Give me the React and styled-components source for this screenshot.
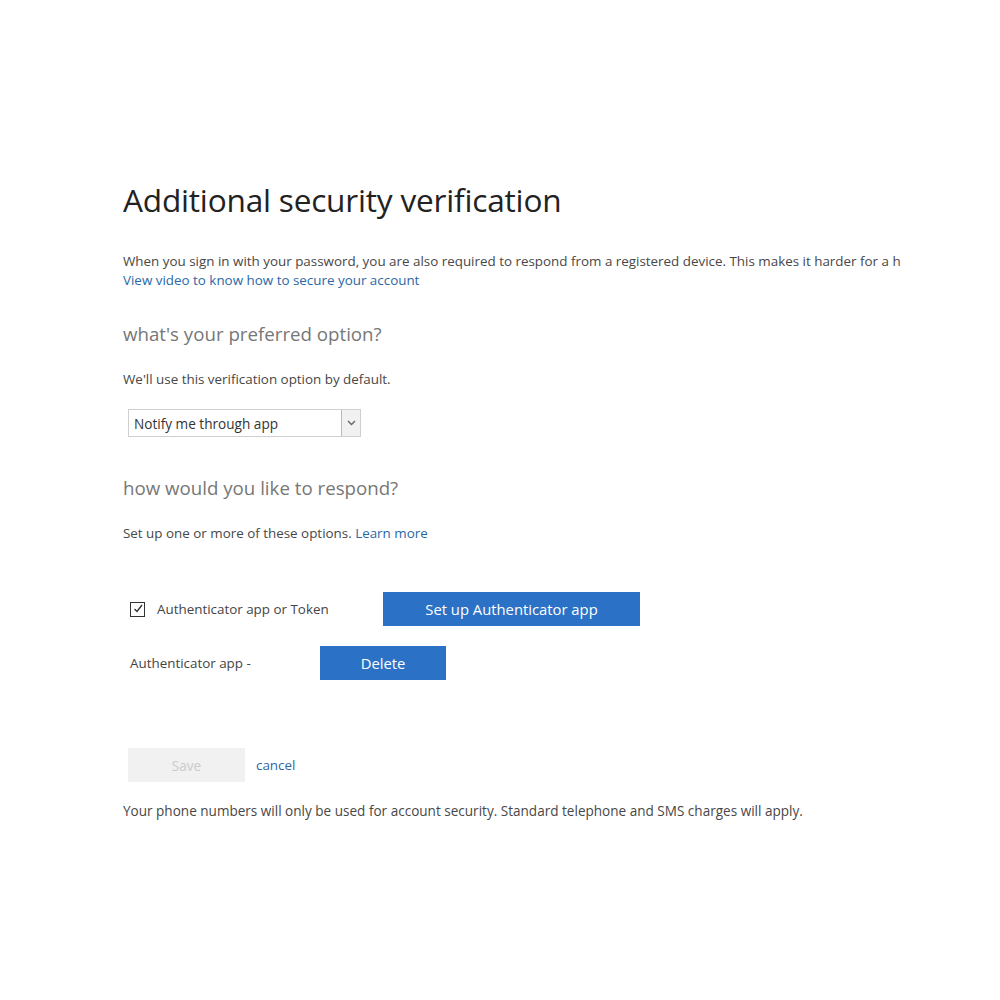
import React from "react";
import styled, { createGlobalStyle } from "styled-components";

const GlobalStyle = createGlobalStyle`
  body {
    margin: 0;
    background: #fff;
    font-family: "Open Sans", "Noto Sans", sans-serif;
    color: #333;
  }
`;

const Page = styled.div`
  width: 777px;
  margin-left: 123px;
  padding-top: 180px;
  overflow: hidden;
`;
const Title = styled.h1`
  margin: 0;
  font-size: 31.6px;
  font-weight: 400;
  line-height: 40px;
  color: #222;
  letter-spacing: -0.2px;
`;
const Text = styled.p`
  margin: ${(p) => p.$mt || 0}px 0 0;
  font-size: ${(p) => p.$size || 13.4}px;
  line-height: 19px;
  color: #474747;
  white-space: nowrap;
`;
const Link = styled.a`
  color: #2a67a6;
  text-decoration: none;
  cursor: pointer;
`;
const Heading = styled.h2`
  margin: ${(p) => p.$mt}px 0 0;
  font-size: 18.7px;
  font-weight: 400;
  line-height: 28px;
  color: #777;
`;
const Select = styled.div`
  margin: 20px 0 0 5px;
  width: 233px;
  height: 28px;
  box-sizing: border-box;
  border: 1px solid #cfcfcf;
  display: flex;
  align-items: center;
  justify-content: space-between;
  padding-left: 5px;
  font-size: 13.6px;
  color: #333;
`;
const SelectArrow = styled.span`
  width: 19px;
  height: 26px;
  box-sizing: border-box;
  border-left: 1px solid #bbb;
  background: #f1f1f1;
  display: flex;
  align-items: center;
  justify-content: center;
`;
const OptionRow = styled.div`
  display: flex;
  align-items: center;
  margin: ${(p) => p.$mt}px 0 0 ${(p) => p.$ml}px;
`;
const CheckBox = styled.span`
  width: 15px;
  height: 15px;
  box-sizing: border-box;
  border: 1px solid #333;
  display: flex;
  align-items: center;
  justify-content: center;
  margin-right: 12px;
`;
const Label = styled.span`
  font-size: 13.4px;
  color: #444;
  width: ${(p) => p.$w}px;
`;
const BlueButton = styled.button`
  width: ${(p) => p.$w}px;
  height: 34px;
  border: none;
  background: #2b72c6;
  color: #fff;
  font-family: inherit;
  font-size: 14.8px;
  padding: 0;
`;
const Actions = styled.div`
  display: flex;
  align-items: center;
  margin: 68px 0 0 5px;
  font-size: 13.4px;
`;
const SaveButton = styled.button`
  width: 117px;
  height: 34px;
  border: none;
  background: #f1f1f1;
  color: #cacaca;
  font-family: inherit;
  font-size: 13.6px;
  padding: 0;
  margin-right: 11px;
`;

export default function App() {
  return (
    <>
      <GlobalStyle />
      <Page>
        <Title>Additional security verification</Title>
        <Text $mt={32}>
          When you sign in with your password, you are also required to respond from a registered device. This makes it harder for a hacker to sign in with just a stolen password.
          <br />
          <Link>View video to know how to secure your account</Link>
        </Text>
        <Heading $mt={30}>what's your preferred option?</Heading>
        <Text $mt={22}>We'll use this verification option by default.</Text>
        <Select>
          Notify me through app
          <SelectArrow>
            <svg width="9" height="6" viewBox="0 0 9 6">
              <path d="M1 1l3.5 3.5L8 1" fill="none" stroke="#666" strokeWidth="1.4" />
            </svg>
          </SelectArrow>
        </Select>
        <Heading $mt={37}>how would you like to respond?</Heading>
        <Text $mt={22}>
          Set up one or more of these options. <Link>Learn more</Link>
        </Text>
        <OptionRow $mt={49} $ml={7}>
          <CheckBox>
            <svg width="12" height="12" viewBox="0 0 12 12">
              <path d="M2.5 6l2.5 2.5L10 2" fill="none" stroke="#333" strokeWidth="1.4" />
            </svg>
          </CheckBox>
          <Label $w={226}>Authenticator app or Token</Label>
          <BlueButton $w={257}>Set up Authenticator app</BlueButton>
        </OptionRow>
        <OptionRow $mt={20} $ml={7}>
          <Label $w={190}>Authenticator app -</Label>
          <BlueButton $w={126}>Delete</BlueButton>
        </OptionRow>
        <Actions>
          <SaveButton>Save</SaveButton>
          <Link>cancel</Link>
        </Actions>
        <Text $mt={20} $size={13.55}>
          Your phone numbers will only be used for account security. Standard telephone and SMS charges will apply.
        </Text>
      </Page>
    </>
  );
}
